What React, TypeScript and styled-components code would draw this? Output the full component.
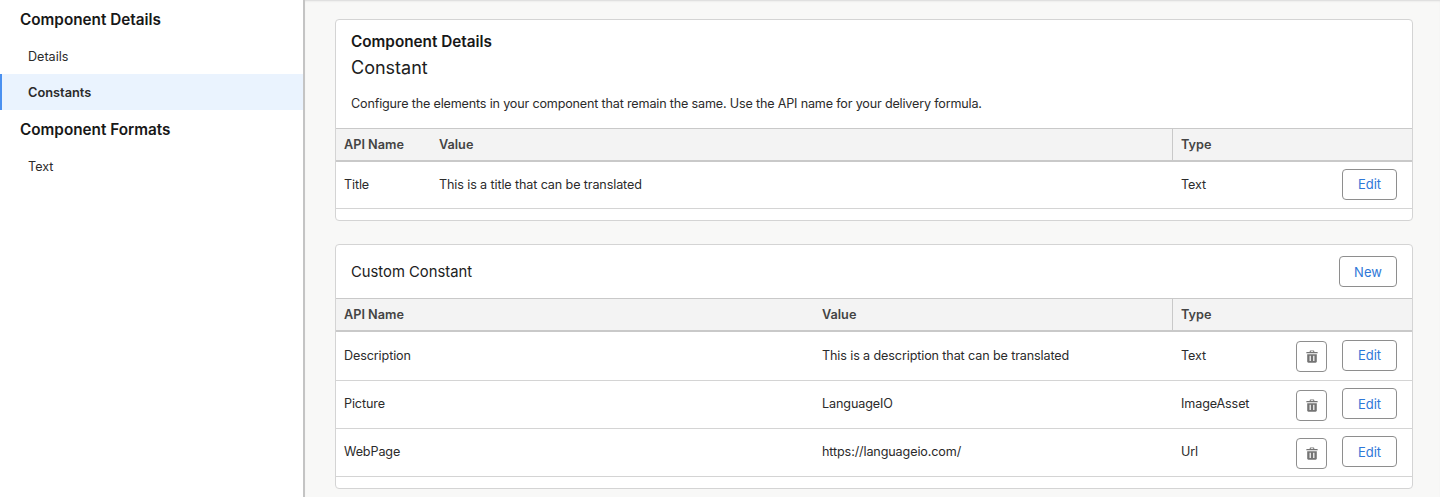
import styled, { createGlobalStyle } from 'styled-components';

const GlobalStyle = createGlobalStyle`
  html, body {
    margin: 0;
    padding: 0;
    height: 100%;
    overflow: hidden;
  }
  body {
    font-family: Inter, "Liberation Sans", sans-serif;
    color: #181818;
    background: #f8f8f7;
  }
`;

const Page = styled.div`
  display: flex;
  height: 497px;
`;

const Sidebar = styled.aside`
  flex: none;
  width: 303px;
  background: #fff;
  border-right: 2px solid #c4c4c4;
`;
const SideTitle = styled.h2`
  margin: 10px 0 8px;
  padding-left: 20px;
  font-size: 15.3px;
  line-height: 20px;
  font-weight: 600;
`;
const SideItem = styled.div<{ $active?: boolean }>`
  height: 36px;
  line-height: 38px;
  padding-left: ${(p) => (p.$active ? 26 : 28)}px;
  font-size: ${(p) => (p.$active ? 12.8 : 12.6)}px;
  font-weight: ${(p) => (p.$active ? 600 : 400)};
  color: #2b2b2b;
  background: ${(p) => (p.$active ? '#eaf3fe' : 'transparent')};
  border-left: ${(p) => (p.$active ? '2px solid #4a90f0' : 'none')};
`;

const Main = styled.main`
  flex: 1;
  padding: 19px 27px 0 30px;
  box-shadow: inset 0 2px 2px -1px #d8d8d8;
`;
const Card = styled.section`
  background: #fff;
  border: 1px solid #d4d4d4;
  border-radius: 4px;
  padding-bottom: 11px;
  margin-bottom: 23px;
  overflow: hidden;
`;
const CardHead = styled.div`
  height: 108px;
  padding: 12px 15px 0;
  box-sizing: border-box;
`;
const CardEyebrow = styled.div`
  font-size: 15.3px;
  line-height: 20px;
  font-weight: 600;
`;
const CardTitle = styled.div`
  margin-top: 3px;
  font-size: 18px;
  line-height: 26px;
  color: #202020;
`;
const CardText = styled.p`
  margin: 14px 0 0;
  font-size: 12.6px;
  letter-spacing: -0.175px;
  line-height: 18px;
  color: #2b2b2b;
`;
const CustomHead = styled.div`
  display: flex;
  align-items: center;
  justify-content: space-between;
  height: 53px;
  padding: 0 15px;
  font-size: 14.8px;
  color: #202020;
`;

const HeadRow = styled.div<{ $cols: string }>`
  display: grid;
  grid-template-columns: ${(p) => p.$cols};
  height: 31px;
  background: #f3f3f3;
  border-top: 1px solid #c9c9c9;
  border-bottom: 2px solid #c9c9c9;
`;
const HeadCell = styled.div<{ $divider?: boolean }>`
  padding-left: 8px;
  font-size: 12.7px;
  line-height: 31px;
  font-weight: 600;
  color: #444;
  border-left: ${(p) => (p.$divider ? '1px solid #c9c9c9' : 'none')};
`;
const Row = styled.div<{ $cols: string; $height: number }>`
  display: grid;
  grid-template-columns: ${(p) => p.$cols};
  align-items: center;
  height: ${(p) => p.$height}px;
  box-sizing: border-box;
  padding-bottom: 2px;
  border-bottom: 1px solid #d4d4d4;
`;
const Cell = styled.div`
  padding-left: 8px;
  font-size: 12.6px;
  letter-spacing: -0.12px;
  color: #2b2b2b;
`;
const TypeCell = styled(Cell)`
  display: flex;
  align-items: center;
  justify-content: space-between;
  padding-left: 9px;
`;
const Actions = styled.div`
  display: flex;
  align-items: center;
  gap: 15px;
  padding-right: 15px;
`;
const Button = styled.button<{ $wide?: boolean }>`
  width: ${(p) => (p.$wide ? 58 : 55)}px;
  height: 31px;
  padding: 0;
  background: #fff;
  border: 1px solid #8e8e8e;
  border-radius: 4px;
  font-family: inherit;
  font-size: 13px;
  color: #2f78d8;
`;
const IconButton = styled.button`
  display: flex;
  align-items: center;
  justify-content: center;
  width: 31px;
  height: 31px;
  margin-top: 3px;
  padding: 0;
  background: #fff;
  border: 1px solid #8e8e8e;
  border-radius: 4px;
`;

const TrashIcon = () => (
  <svg width="12" height="13" viewBox="0 0 12 13" fill="#747474">
    <path d="M4.4 0.5h3.2c.4 0 .7.3.7.7v.8h2.9c.3 0 .5.2.5.5v.8H.3v-.8c0-.3.2-.5.5-.5h2.9v-.8c0-.4.3-.7.7-.7zM4.8 1.2V2h2.4v-.8z" />
    <path fillRule="evenodd" d="M1.2 4.2h9.6v7.3c0 .7-.5 1.2-1.2 1.2H2.4c-.7 0-1.2-.5-1.2-1.2zM3.6 5.8v5.2h1.2V5.8zM7.2 5.8v5.2h1.2V5.8z" />
  </svg>
);

const topCols = '95px 741px 1fr';
const customCols = '478px 358px 1fr';

const customRows = [
  { name: 'Description', value: 'This is a description that can be translated', type: 'Text', height: 49 },
  { name: 'Picture', value: 'LanguageIO', type: 'ImageAsset', height: 48 },
  { name: 'WebPage', value: 'https://languageio.com/', type: 'Url', height: 48 },
];

const App = () => (
  <Page>
    <GlobalStyle />
    <Sidebar>
      <SideTitle>Component Details</SideTitle>
      <SideItem>Details</SideItem>
      <SideItem $active>Constants</SideItem>
      <SideTitle>Component Formats</SideTitle>
      <SideItem>Text</SideItem>
    </Sidebar>
    <Main>
      <Card>
        <CardHead>
          <CardEyebrow>Component Details</CardEyebrow>
          <CardTitle>Constant</CardTitle>
          <CardText>
            Configure the elements in your component that remain the same. Use the API name for your delivery formula.
          </CardText>
        </CardHead>
        <HeadRow $cols={topCols}>
          <HeadCell>API Name</HeadCell>
          <HeadCell>Value</HeadCell>
          <HeadCell $divider>Type</HeadCell>
        </HeadRow>
        <Row $cols={topCols} $height={47}>
          <Cell>Title</Cell>
          <Cell>This is a title that can be translated</Cell>
          <TypeCell>
            Text
            <Actions>
              <Button>Edit</Button>
            </Actions>
          </TypeCell>
        </Row>
      </Card>
      <Card>
        <CustomHead>
          Custom Constant
          <Button $wide>New</Button>
        </CustomHead>
        <HeadRow $cols={customCols}>
          <HeadCell>API Name</HeadCell>
          <HeadCell>Value</HeadCell>
          <HeadCell $divider>Type</HeadCell>
        </HeadRow>
        {customRows.map((row) => (
          <Row key={row.name} $cols={customCols} $height={row.height}>
            <Cell>{row.name}</Cell>
            <Cell>{row.value}</Cell>
            <TypeCell>
              {row.type}
              <Actions>
                <IconButton aria-label="Delete">
                  <TrashIcon />
                </IconButton>
                <Button>Edit</Button>
              </Actions>
            </TypeCell>
          </Row>
        ))}
      </Card>
    </Main>
  </Page>
);

export default App;
